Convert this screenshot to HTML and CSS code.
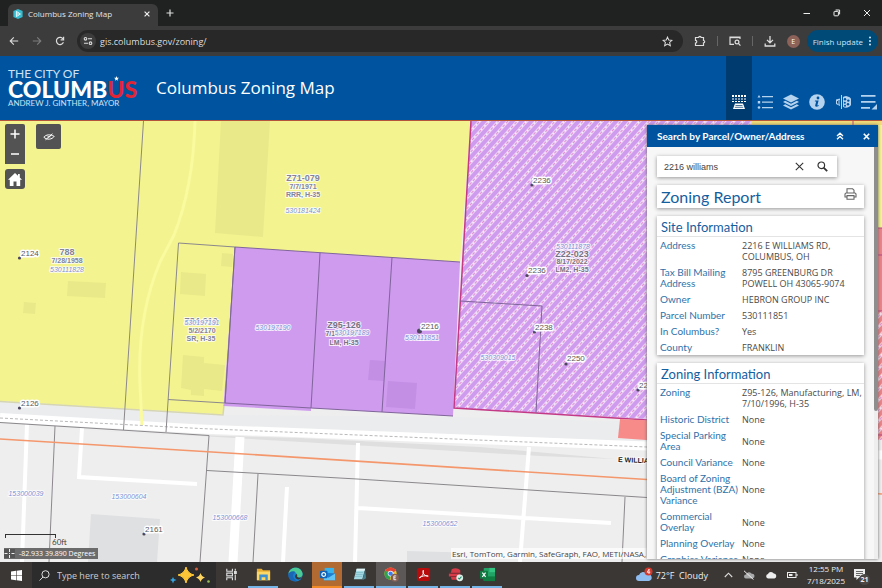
FILE: index.html
```html
<!DOCTYPE html>
<html lang="en">
<head>
<meta charset="utf-8">
<title>Columbus Zoning Map</title>
<link rel="stylesheet" href="styles.css">
</head>
<body>
<header class="tabstrip">
  <div class="tab">
    <svg class="favicon" viewBox="0 0 10 10"><path d="M5 0 9.6 2v6L5 10 .4 8V2z" fill="#35bcd0"/><path d="M3.4 2.4 7.4 5 3.4 7.6z" fill="none" stroke="#e8fbff"/><circle cx="4.9" cy="5" r=".8" fill="#fff"/></svg>
    <span class="tab-title">Columbus Zoning Map</span>
    <button class="plain" aria-label="Close tab"><svg width="6" height="6" viewBox="0 0 6 6"><path d="M.6.6 5.4 5.4M5.4.6.6 5.4" stroke="#eee" stroke-width="1.2"/></svg></button>
  </div>
  <button class="plain newtab" aria-label="New tab"><svg width="8" height="8" viewBox="0 0 8 8"><path d="M4 .5v7M.5 4h7" stroke="#ddd" stroke-width="1.2"/></svg></button>
  <div class="window-buttons">
    <button class="plain" aria-label="Minimize"><svg width="8" height="8" viewBox="0 0 8 8"><path d="M.5 4.5h6.5" stroke="#eee"/></svg></button>
    <button class="plain" aria-label="Restore"><svg width="8" height="8" viewBox="0 0 8 8" fill="none" stroke="#eee"><rect x="1" y="2.4" width="4.4" height="4.4" rx=".6"/><path d="M2.6 1h4v4.4"/></svg></button>
    <button class="plain" aria-label="Close"><svg width="8" height="8" viewBox="0 0 8 8"><path d="M1 1l6 6M7 1 1 7" stroke="#eee"/></svg></button>
  </div>
</header>

<nav class="toolbar">
  <div class="nav-buttons">
    <button class="plain" aria-label="Back"><svg width="10" height="10" viewBox="0 0 10 10" fill="none" stroke="#ddd" stroke-width="1.1"><path d="M9.2 5H1.4M4.8 1.4 1.2 5l3.6 3.6"/></svg></button>
    <button class="plain" aria-label="Forward"><svg width="10" height="10" viewBox="0 0 10 10" fill="none" stroke="#7d7d7d" stroke-width="1.1"><path d="M.8 5h7.8M5.2 1.4 8.8 5 5.2 8.6"/></svg></button>
    <button class="plain" aria-label="Reload"><svg width="10" height="10" viewBox="0 0 10 10" fill="none" stroke="#ddd" stroke-width="1.2"><path d="M8.4 6.2A3.6 3.6 0 1 1 8.2 3.2"/><path d="M8.6.8v3H5.6"/></svg></button>
  </div>
  <div class="omnibox">
    <span class="site-info"><svg width="10" height="10" viewBox="0 0 10 10" fill="none" stroke="#ddd" stroke-width="1.1"><circle cx="2.5" cy="2.8" r="1.3"/><path d="M5 2.8h4M1 7.2h4"/><circle cx="7.5" cy="7.2" r="1.3"/></svg></span>
    <input class="url" aria-label="Address bar" value="gis.columbus.gov/zoning/">
    <button class="plain" aria-label="Bookmark"><svg width="11" height="11" viewBox="0 0 12 12" fill="none" stroke="#ddd" stroke-width="1.1"><path d="M6 1.2l1.4 3.2 3.5.3-2.6 2.3.8 3.5L6 8.7l-3.1 1.8.8-3.5L1.1 4.7l3.5-.3z"/></svg></button>
  </div>
  <div class="extras">
    <button class="plain" aria-label="Extensions"><svg width="12" height="12" viewBox="0 0 12 12" fill="none" stroke="#ddd" stroke-width="1.2"><path d="M1.5 2.5h3.2a1.2 1.2 0 0 1 2.4 0h2.4v3a1.2 1.2 0 0 1 0 2.4v2.6h-8V8a1.3 1.3 0 0 0 0-2.6z"/></svg></button>
    <i class="bar"></i>
    <button class="plain" aria-label="Lens"><svg width="12" height="12" viewBox="0 0 12 12" fill="none" stroke="#ddd" stroke-width="1.2"><path d="M5 9.4H1V2h10v2"/><path d="M1 2.6h10"/><circle cx="8" cy="7" r="1.9"/><path d="M9.4 8.4l2 2.2"/></svg></button>
    <i class="bar"></i>
    <button class="plain" aria-label="Downloads"><svg width="12" height="12" viewBox="0 0 12 12" fill="none" stroke="#ddd" stroke-width="1.3"><path d="M6 1v6.6M3 4.9l3 3 3-3M1.2 8.4v2.6h9.6V8.4"/></svg></button>
    <span class="avatar">E</span>
    <button class="update">Finish update <svg width="4" height="10" viewBox="0 0 4 10" fill="#d5ecfb"><circle cx="2" cy="1.5" r="1"/><circle cx="2" cy="5" r="1"/><circle cx="2" cy="8.5" r="1"/></svg></button>
  </div>
</nav>

<header class="site-header">
  <div class="logo">
    <span class="logo-top">THE CITY OF</span>
    <span class="logo-name">COLUMB<span class="red">US</span><svg class="star" viewBox="0 0 10 10"><path d="M5 0l1.3 3.5L10 3.7 7.1 6 8.1 9.7 5 7.6 1.9 9.7 2.9 6 0 3.7l3.7-.2z" fill="#fff"/></svg></span>
    <span class="logo-mayor">ANDREW J. GINTHER, MAYOR</span>
  </div>
  <h1>Columbus Zoning Map</h1>
  <div class="widgets">
    <button class="widget active" aria-label="Search"><svg viewBox="0 0 16 16" fill="#fff"><path d="M1 1h2v2H1zM4 1h2v2H4zM7 1h2v2H7zM10 1h2v2h-2zM13 1h2v2h-2zM1.500 4h1v2h-1zM4.500 4h1v2h-1zM7.500 4h1v2h-1zM10.500 4h1v2h-1zM13.500 4h1v2h-1zM1 7h2v1H1zM4 7h2v1H4zM7 7h2v1H7zM10 7h2v1h-2zM13 7h2v1h-2z"/><path d="M4 9.500h8l2 5.500H2z"/><path d="M4.500 11.500h7M3.800 13.300h8.400" stroke="#003b70" stroke-width=".7"/></svg></button>
    <button class="widget" aria-label="Legend"><svg viewBox="0 0 16 16"><path d="M2 1l1.500 2.500h-3zM.8 7h2.400v2.400H.8z"/><circle cx="2" cy="13.500" r="1.300"/><path d="M5 2h11v1.300H5zM5 7.500h11v1.300H5zM5 13h11v1.300H5z"/></svg></button>
    <button class="widget" aria-label="Layers"><svg viewBox="0 0 16 16"><path d="M8 .5 16 4.500 8 8.500 0 4.500z"/><path d="M2.200 6.800 0 8l8 4 8-4-2.200-1.200L8 9.700z"/><path d="M2.200 10.300 0 11.500l8 4 8-4-2.200-1.200L8 13.200z"/></svg></button>
    <button class="widget" aria-label="About"><svg viewBox="0 0 16 16"><circle cx="8" cy="8" r="7.800"/><g fill="#00549f"><circle cx="9" cy="4" r="1.400"/><path d="M6 6.500h3.600L8.300 11.500l1.500-.5-.3 1c-1.500 1-3.700 1.200-3.300-.7l1-3.900-1.400.1z"/></g></svg></button>
    <button class="widget" aria-label="Draw"><svg viewBox="0 0 16 16"><path d="M9 2.500A5.800 5.800 0 1 1 8 12.800V3z"/><path d="M1 5.500l4-1v7.500l-4-2zM6 1h1v14H6z"/><path d="M2.500 7v2.500M4 6v4.500" stroke="#00549f"/><g fill="#00549f"><circle cx="10" cy="5.300" r="1.200"/><circle cx="13.300" cy="6.600" r="1.200"/><circle cx="9.800" cy="8.800" r="1"/><circle cx="13" cy="10.200" r="1.200"/><circle cx="10" cy="11.800" r="1"/></g></svg></button>
    <button class="widget" aria-label="More"><svg viewBox="0 0 16 16"><path d="M0 1h14.500v1.800H0zM0 7h14.500v1.800H0zM0 13h9v1.800H0zM16 10v5.500h-5.500z"/></svg></button>
  </div>
</header>

<main class="map">
  <svg class="canvas" viewBox="0 121 882 441" preserveAspectRatio="xMinYMin slice">
    <defs>
      <pattern id="hatch" width="7" height="60" patternUnits="userSpaceOnUse" patternTransform="rotate(42)">
        <path d="M3.500 0v60" stroke="#f8ecfa" stroke-width="2.400"/>
        <path d="M3.500 0v60" stroke="#dc7cc8" stroke-width=".8" stroke-dasharray="3 2"/>
      </pattern>
    </defs>
    <rect y="121" width="882" height="441" fill="#eee"/>
    <path d="M0 401 224 415 454 417 650 422V442L0 416z" fill="#ebecee"/>
    <path d="M0 425 55 428 160 434 300 438 480 447 615 459 540 456 200 436z" fill="#dfdfdf"/>
    <g fill="none" stroke="#fff" stroke-width="4">
      <path d="M27 424 22 562M82 428 79 477 197 484M358 443 355 562M529 447 520 562M358 508 611 523M287 487 283 562"/>
      <path d="M240 437 233 562" stroke-width="9"/>
      <path d="M0 417.500 200 429 647 446 882 455" stroke-width="9"/>
    </g>
    <path d="M0 418 200 428.500 647 447" fill="none" stroke="#b9b9b9" stroke-dasharray="3 2"/>
    <path d="M91 514 160 519 157 562H88zM407 551 480 553V562H407z" fill="#dfe0e2"/>
    <path d="M0 121H471L460 262 235 247 223 414.500 0 401z" fill="#f3f38f"/>
    <path d="M0 401.500 223 415 224 405" fill="none" stroke="#d5d5b4" stroke-width="1.500"/>
    <path d="M221 121H270L263 237 215 233zM68 281 106 283 105 298 67 296zM24 302 36 303 35 314 23 313zM181 272 206 274 205 296 180 294zM222 253 233 254 232 267 221 266zM183 355 204 357V363L225 365 222 391 204 389V396L191 395V390L181 388z" fill="#e9e98a"/>
    <path d="M195 121C194 160 188 200 174 235L160 262C144 300 138 340 140 385L142 425" fill="none" stroke="#fafa9f" stroke-width="3"/>
    <path d="M235 247 460 262 453 416 311 408V411L223.500 406z" fill="#ce9bee"/>
    <path d="M370 360 386 361 384 381 368 380zM388 381 417 383 415 409 386 407z" fill="#c38fe5"/>
    <path d="M471 121H752V425L454 408z" fill="#ce9bee"/>
    <path d="M471 121H752V425L454 408z" fill="url(#hatch)"/>
    <path d="M471 121 454 408 647 420" fill="none" stroke="#c43a86" stroke-width="1.500"/>
    <path d="M620 419 660 421V441L618 438z" fill="#f68b8a"/>
    <path d="M752 121H882V228H752z" fill="#f1dc78"/>
    <path d="M860 125H882V228H860z" fill="#f3f38f"/>
    <path d="M870 228H882V440H870z" fill="#ee8286"/>
    <path d="M870 311H882V440H870z" fill="url(#hatch)"/>
    <path d="M853 121V126M870 228H882M870 255H882M870 311H882M870 435H882" stroke="#b9437e" fill="none"/>
    <g fill="none" stroke="#8b888c">
      <path d="M143.500 121 123.500 430M166 432 178.500 243 235 247 225 403M168 399.500 225 403"/>
      <path d="M0 422.500 209 435.500 200 562M55 426 49 562M207 470.500 357 479 647 497.500M258 474 253 562M625 497 622 562"/>
    </g>
    <g fill="none" stroke="#80659a">
      <path d="M235 247 460 262M320 253 311 408M392 257.500 382 412M225 403 311 408 453 416M460 301 542 306 536 413M235 247 225 403"/>
    </g>
    <path d="M0 439 220 452.500 647 479.500 882 494" fill="none" stroke="#f4976c" stroke-width="1.600"/>
    <g fill="#4e4658">
      <circle cx="19.500" cy="258" r="1.600"/><circle cx="19.500" cy="408" r="1.600"/><circle cx="144" cy="534" r="1.600"/><circle cx="532" cy="185" r="1.600"/><circle cx="527" cy="275.500" r="1.600"/><circle cx="534.500" cy="332" r="1.600"/><circle cx="566" cy="364" r="1.600"/><circle cx="638" cy="390" r="1.600"/><circle cx="419.500" cy="331" r="2.500"/><circle cx="200" cy="332" r="1.600"/>
    </g>
    <g class="halo addr">
      <text x="21" y="256">2124</text><text x="21" y="406">2126</text><text x="145" y="532">2161</text><text x="533" y="183">2236</text><text x="528" y="273">2236</text><text x="535" y="330">2238</text><text x="567" y="361">2250</text><text x="639" y="388">2254</text><text x="421" y="329">2216</text>
    </g>
    <g class="halo case">
      <text class="big" x="67" y="255">788</text><text x="67" y="263">7/28/1958</text>
      <text class="big" x="303" y="181">Z71-079</text><text x="303" y="189">7/7/1971</text><text x="303" y="197">RRR, H-35</text>
      <text class="big" x="201" y="324">Z84-010</text><text x="202" y="333">5/2/2170</text><text x="201" y="341">SR, H-35</text>
      <text class="big grey" x="344" y="328">Z95-126</text><text class="grey" x="341" y="336">7/10/1996</text><text class="grey" x="344" y="345">LM, H-35</text>
      <text class="big grey" x="572" y="257">Z22-023</text><text class="grey" x="572" y="264">8/17/2022</text><text class="grey" x="572" y="272">LM2, H-35</text>
    </g>
    <g class="halo parcel">
      <text x="67" y="272">530111828</text><text x="303" y="213">530181424</text><text x="202" y="325">530197191</text><text x="273" y="330">530197190</text><text x="352" y="335">530197189</text><text x="422" y="340">530111851</text><text x="573" y="249">530111878</text><text x="498" y="360">530309015</text>
      <text x="26" y="496">153000039</text><text x="129" y="499">153000604</text><text x="230" y="520">153000668</text><text x="440" y="526">153000652</text>
    </g>
    <text class="road halo" x="618" y="462" transform="rotate(2 618 462)">E WILLIAMS RD</text>
  </svg>

  <div class="controls">
    <div class="zoom-group">
      <button class="ctl" aria-label="Zoom in"><svg width="10" height="10" viewBox="0 0 10 10"><path d="M5 .5v9M.5 5h9" stroke="#fff" stroke-width="1.500"/></svg></button>
      <button class="ctl" aria-label="Zoom out"><svg width="10" height="10" viewBox="0 0 10 10"><path d="M1 5h8" stroke="#fff" stroke-width="1.500"/></svg></button>
      <button class="ctl home" aria-label="Home"><svg width="14" height="13" viewBox="0 0 14 13" fill="#fff"><path d="M7 0l3 2.800V1h1.800v3.500L14 6.800h-1.800V13H8.500V8.500h-3V13H1.800V6.800H0z"/></svg></button>
    </div>
    <button class="ctl eye" aria-label="Toggle labels"><svg width="12" height="8" viewBox="0 0 12 8" fill="none" stroke="#fff"><path d="M.8 4.200C3 1.500 7 1 11.200 3.400 9 6.600 4 7.200.8 4.200zM2.500 6.800 9.500.8"/><path d="M4.500 3.800h3"/></svg></button>
  </div>
  <div class="scale"><div class="scale-line"></div><span>60ft</span></div>
  <div class="coords"><svg width="11" height="9" viewBox="0 0 11 9"><path d="M5.500 0v3M5.500 6v3M.5 4.500h3M7.500 4.500h3M5 4.500h1" stroke="#eee"/></svg><span>-82.933 39.890 Degrees</span></div>
  <div class="credits">Esri, TomTom, Garmin, SafeGraph, FAO, METI/NASA,</div>

  <section class="panel">
    <header class="panel-head">
      <h2>Search by Parcel/Owner/Address</h2>
      <button class="plain" aria-label="Collapse"><svg width="8" height="8" viewBox="0 0 8 8" fill="none" stroke="#fff" stroke-width="1.300"><path d="M1 4l3-2.800L7 4M1 7.200l3-2.800 3 2.800"/></svg></button>
      <button class="plain" aria-label="Close panel"><svg width="7" height="7" viewBox="0 0 7 7"><path d="M.8.8l5.400 5.400M6.200.8.8 6.200" stroke="#fff" stroke-width="1.600"/></svg></button>
    </header>
    <div class="panel-body">
      <div class="content">
        <form class="search card">
          <input aria-label="Parcel, owner or address" value="2216 williams">
          <button class="plain" type="button" aria-label="Clear"><svg width="9" height="9" viewBox="0 0 9 9"><path d="M.8.8l7.400 7.400M8.200.8.8 8.200" stroke="#333" stroke-width="1.100"/></svg></button>
          <button class="plain" type="button" aria-label="Search"><svg width="11" height="11" viewBox="0 0 11 11" fill="none" stroke="#333"><circle cx="4.300" cy="4.300" r="3.300" stroke-width="1.200"/><path d="M6.800 6.800l3.400 3.400" stroke-width="1.800"/></svg></button>
        </form>
        <div class="card report">
          <h2>Zoning Report</h2>
          <button class="plain" aria-label="Print"><svg width="13" height="12" viewBox="0 0 13 12" fill="none" stroke="#666" stroke-width="1.100"><path d="M3 5V.8h5.600L10 2.200V5M3 9H1V6.200C1 5.500 1.500 5 2.200 5h8.600c.7 0 1.200.5 1.200 1.200V9h-2"/><path d="M3 7.600h7v3.600H3z"/></svg></button>
        </div>
        <section class="card info">
          <h3>Site Information</h3>
          <table>
            <tr><th>Address</th><td>2216 E WILLIAMS RD,<br>COLUMBUS, OH</td></tr>
            <tr><th>Tax Bill Mailing<br>Address</th><td>8795 GREENBURG DR<br>POWELL OH 43065-9074</td></tr>
            <tr><th>Owner</th><td>HEBRON GROUP INC</td></tr>
            <tr><th>Parcel Number</th><td>530111851</td></tr>
            <tr><th>In Columbus?</th><td>Yes</td></tr>
            <tr><th>County</th><td>FRANKLIN</td></tr>
          </table>
        </section>
        <section class="card info">
          <h3>Zoning Information</h3>
          <table>
            <tr><th>Zoning</th><td>Z95-126, Manufacturing, LM,<br>7/10/1996, H-35</td></tr>
            <tr><th>Historic District</th><td>None</td></tr>
            <tr><th>Special Parking<br>Area</th><td>None</td></tr>
            <tr><th>Council Variance</th><td>None</td></tr>
            <tr><th>Board of Zoning<br>Adjustment (BZA)<br>Variance</th><td>None</td></tr>
            <tr><th>Commercial<br>Overlay</th><td>None</td></tr>
            <tr><th>Planning Overlay</th><td>None</td></tr>
            <tr><th>Graphics Variance</th><td>None</td></tr>
          </table>
        </section>
      </div>
      <div class="scrollbar"><div class="thumb"></div></div>
    </div>
  </section>
</main>

<footer class="taskbar">
  <button class="plain start" aria-label="Start"><svg width="11" height="11" viewBox="0 0 11 11" fill="#fff"><path d="M0 1.500 5 .8v4.400H0zM5.600.7 11 0v5.200H5.600zM0 5.800h5v4.400l-5-.7zM5.600 5.800H11V11l-5.400-.7z"/></svg></button>
  <label class="tasksearch">
    <svg width="11" height="11" viewBox="0 0 11 11" fill="none" stroke="#ddd"><circle cx="6.500" cy="4.300" r="3.600"/><path d="M4 7 .6 10.500"/></svg>
    <input placeholder="Type here to search" aria-label="Type here to search">
    <svg class="sparkles" width="42" height="20" viewBox="0 0 42 20"><path d="M16 2Q17.500 8.500 24 10 17.500 11.500 16 18 14.500 11.500 8 10 14.500 8.500 16 2z" fill="#fbc537" stroke="#fbc537" stroke-linejoin="round"/><path d="M30.500 8Q31.500 11.500 35 12.500 31.500 13.500 30.500 17 29.500 13.500 26 12.500 29.500 11.500 30.500 8z" fill="#fcd462"/><path d="M3 12l1 2 2.500 1L4 16l-1 2.500L2 16l-2-1 2-1z" fill="#35a4e0"/><circle cx="26.500" cy="4" r="1.500" fill="#d9603b"/><circle cx="38.500" cy="16.500" r="1.300" fill="#9bc256"/></svg>
  </label>
  <div class="apps">
    <button class="app" aria-label="Task view"><svg viewBox="0 0 18 18" fill="none" stroke="#ddd" stroke-width="1.200"><path d="M4 3v2.500h6V3M4 15v-2.500h6V15M4 7.500h6v3H4zM13 3v2M13 9v6"/><path d="M12.200 6h1.800v2h-1.800z" fill="#ddd"/></svg></button>
    <button class="app open" aria-label="File Explorer"><svg viewBox="0 0 18 18"><path d="M2 3h5l1.500 1.500H16V15H2z" fill="#e9ae31"/><path d="M2 6h14v9H2z" fill="#fbd768"/><path d="M4.500 9h9v6h-2.500v-3H7v3H4.500z" fill="#3d8fd0"/></svg></button>
    <button class="app" aria-label="Edge"><svg viewBox="0 0 18 18"><circle cx="9" cy="9" r="7.500" fill="#1580ce"/><path d="M1.500 8C3 0 15-.5 16.500 8c.3 3-2 4.500-5 4-1.500-.3-1.600-1.200-1-2 .8-3-5-4-9-2z" fill="#4bcb93"/><path d="M1.500 9c1-4 6-4.500 8-2-4 0-4.500 6 1 8.500C5 17.500 1 14 1.500 9z" fill="#1a66b4"/><path d="M11 9.500c-1.200 1.800 1 4 4.500 2.500-1 2-3 2.500-4.500 2-3-1-3-4-1-5.500z" fill="#3a3634"/></svg></button>
    <button class="app alert" aria-label="Outlook"><svg viewBox="0 0 18 18"><path d="M6 2h10v6H6z" fill="#35b4ee"/><path d="M5 7l12 1v7H5z" fill="#1c7fd2"/><path d="M17 8l-7 4.500L5 8v7h12z" fill="#61c4f2"/><rect x="1" y="5" width="8" height="8" rx="1" fill="#0f64ba"/><circle cx="5" cy="9" r="2" fill="none" stroke="#fff" stroke-width="1.200"/></svg></button>
    <button class="app open" aria-label="Notepad"><svg viewBox="0 0 18 18"><path d="M6 3h9l-3 11H3z" fill="#a5d9e4"/><path d="M6 3h9l-.6 2H5.500z" fill="#e4f3f5"/><path d="M15 4l1 9-4 2z" fill="#457e8d"/><path d="M5 7h8M4.500 9h8M4 11h8" stroke="#70adbc" stroke-width=".6"/></svg></button>
    <button class="app open current" aria-label="Chrome"><svg viewBox="0 0 18 18"><circle cx="8" cy="8" r="6.500" fill="#f7c42d"/><path d="M8 8 2.400 4.700A6.500 6.500 0 0 1 13.700 5z" fill="#e54335"/><path d="M8 8 2.400 4.700A6.500 6.500 0 0 0 7.500 14.500z" fill="#2fa352"/><circle cx="8" cy="8" r="3" fill="#fff"/><circle cx="8" cy="8" r="2.300" fill="#3b7ded"/><circle cx="12.500" cy="12.500" r="4.300" fill="#826056"/><path d="M14 10.500h-2.500v4H14M11.500 12.500h2" fill="none" stroke="#fff" stroke-width=".9"/></svg></button>
    <button class="app open" aria-label="Acrobat"><svg viewBox="0 0 18 18"><rect x="2" y="2" width="14" height="14" rx="2.500" fill="#b80c0c"/><path d="M4.500 12.500c3-1 5-5 4.300-8-1.300 2 .7 6.500 5.200 6.200-3-1-7 0-9.500 1.800z" fill="none" stroke="#fff"/></svg></button>
    <button class="app open" aria-label="Database client"><svg viewBox="0 0 18 18"><path d="M5 3.500c3-2 7-1.500 9 1v3H4zM2 8h12v3H2zM4 11.500h10l-2 3H5z" fill="#d53b48"/><path d="M2 7.600h12M3 11.200h11" stroke="#8d2833"/><circle cx="13.500" cy="12.500" r="3.600" fill="#dceee8"/><path d="M11.800 12.500l1.300 1.300 2.200-2.600" fill="none" stroke="#258d6d" stroke-width="1.100"/></svg></button>
    <button class="app open" aria-label="Excel"><svg viewBox="0 0 18 18"><rect x="5" y="2" width="12" height="14" rx="1" fill="#21a366"/><path d="M11 2h6v4.500h-6z" fill="#33c481"/><path d="M5 11h12v5H5z" fill="#107c41"/><rect x="1" y="5" width="8.500" height="8.500" rx="1" fill="#117a43"/><path d="M3.500 7l3.500 4.500M7 7l-3.500 4.500" stroke="#fff" stroke-width="1.200"/></svg></button>
  </div>
  <div class="tray">
    <svg width="18" height="16" viewBox="0 0 18 16"><path d="M3 14a3 3 0 0 1 0-6 4.500 4.500 0 0 1 8-1 3.500 3.500 0 0 1 2 7z" fill="#8fbdf0"/><circle cx="12.500" cy="4.500" r="4" fill="#d3382d"/><path d="M13 2v5M13.200 2.200 11 5.200h3.300" fill="none" stroke="#fff" stroke-width=".8"/></svg>
    <span class="weather">72°F&nbsp; Cloudy</span>
    <svg width="9" height="6" viewBox="0 0 9 6"><path d="M.8 5 4.500 1.200 8.200 5" fill="none" stroke="#ddd" stroke-width="1.100"/></svg>
    <svg width="12" height="10" viewBox="0 0 12 10"><path d="M3 8.500a2 2 0 0 1 0-4 3.200 3.200 0 0 1 5.800-.7 2.300 2.300 0 0 1 .7 4.700z" fill="#aaa"/><path d="M1 .8l9.500 8.800" stroke="#eee"/></svg>
    <svg width="12" height="10" viewBox="0 0 12 10"><path d="M3 8.500a2.300 2.300 0 0 1 0-4.500 3.200 3.200 0 0 1 5.800-.4 2.500 2.500 0 0 1 .7 4.900z" fill="#eee"/></svg>
    <svg width="11" height="8" viewBox="0 0 11 8"><rect x=".5" y="1.500" width="8.500" height="5" fill="none" stroke="#eee"/><path d="M2 3h3.500v2H2zM9.500 3h1v2h-1z" fill="#eee"/></svg>
    <div class="clock"><span>12:55 PM</span><span>7/18/2025</span></div>
    <span class="notify"><svg width="12" height="12" viewBox="0 0 12 12"><path d="M0 0h11v8.500H5L2.500 11V8.500H0z" fill="#eee"/><path d="M2 2.500h7M2 4.500h7M2 6.500h4" stroke="#444" stroke-width=".8"/></svg><b>21</b></span>
  </div>
</footer>
</body>
</html>
```
FILE: styles.css
```css
* { box-sizing: border-box; }
html, body { height: 100%; }
body { margin: 0; display: flex; flex-direction: column; overflow: hidden; font-family: Lato, sans-serif; }
button, input { font: inherit; color: inherit; border: 0; background: none; padding: 0; margin: 0; }
input { min-width: 0; outline: 0; }
svg { display: block; flex: none; }
.plain { display: flex; align-items: center; justify-content: center; }

/* Browser chrome */
.tabstrip { display: flex; flex: none; height: 26px; background: #202222; font-family: "Open Sans", sans-serif; }
.tab { display: flex; align-items: center; gap: 5px; width: 150px; margin: 4px 0 0 8px; padding: 0 8px 3px 5px; border-radius: 6px 6px 0 0; background: #3c3c3c; }
.favicon { width: 10px; height: 10px; }
.tab-title { flex: 1; color: #e4e4e4; font-size: 8px; }
.newtab { width: 24px; }
.window-buttons { display: flex; gap: 22px; margin-left: auto; padding-right: 11px; }
.toolbar { display: flex; flex: none; align-items: center; height: 30px; background: #3c3c3c; padding-right: 4px; font-family: "Open Sans", sans-serif; }
.nav-buttons { display: flex; gap: 13px; padding: 0 12px 0 9px; }
.omnibox { display: flex; flex: 1; align-items: center; height: 22px; padding: 0 10px 0 3px; border-radius: 11px; background: #282828; color: #ddd; font-size: 9px; }
.site-info { display: flex; align-items: center; justify-content: center; width: 16px; height: 16px; border-radius: 8px; background: #3c3c3c; }
.url { flex: 1; margin-left: 4px; }
.extras { display: flex; align-items: center; gap: 11px; padding-left: 11px; }
.bar { width: 1px; height: 10px; background: #666; }
.avatar { width: 13px; height: 13px; border-radius: 7px; background: #8d6259; color: #fff; font-size: 7px; line-height: 13px; text-align: center; }
.update { display: flex; align-items: center; gap: 5px; height: 22px; margin-left: -4px; padding: 0 6px; border-radius: 11px; background: #004a77; color: #cbe6f8; font-size: 8px; white-space: nowrap; }

/* Application header */
.site-header { display: flex; flex: none; align-items: stretch; height: 65px; background: #00549f; border-bottom: 1px solid #b3543c; color: #fff; }
.logo { display: flex; flex-direction: column; width: 148px; padding: 12px 0 0 8px; color: #cfe2f4; }
.logo-top { font-size: 12px; line-height: 11px; }
.logo-name { position: relative; color: #fff; font-size: 23px; font-weight: 900; line-height: 20px; }
.red { color: #e02536; }
.star { position: absolute; left: 106px; top: -3px; width: 5px; height: 5px; }
.logo-mayor { font-size: 8px; line-height: 9px; white-space: nowrap; }
h1 { align-self: center; margin: 0 0 0 8px; font-family: "Open Sans", sans-serif; font-size: 17px; font-weight: 400; line-height: 24px; }
.widgets { display: flex; margin-left: auto; }
.widget { display: flex; align-items: flex-end; justify-content: center; width: 26px; padding-bottom: 10px; }
.widget svg { width: 16px; height: 16px; fill: #b5d2ee; }
.widget.active { background: #003b70; }
.widget.active svg { fill: #fff; }

/* Map */
.map { position: relative; flex: 1; min-height: 0; overflow: hidden; background: #eee; }
.canvas { width: 100%; height: 100%; }
.canvas text { font-family: "Liberation Sans", sans-serif; font-size: 7px; }
.halo { paint-order: stroke; stroke: #fff; stroke-opacity: .8; stroke-width: 2px; stroke-linejoin: round; }
.addr { stroke-opacity: 1; stroke-width: 3px; }
.canvas .addr text { font-size: 8px; fill: #5a5a5a; }
.case text { fill: #83839d; font-weight: 700; text-anchor: middle; }
.canvas .case .big { font-size: 9px; }
.case .grey { fill: #777383; }
.parcel text { fill: #7c93d6; font-style: italic; text-anchor: middle; }
.canvas .road { font-weight: 700; fill: #222; }
.controls { position: absolute; left: 5px; top: 3px; display: flex; align-items: flex-start; gap: 11px; }
.zoom-group { display: flex; flex-direction: column; }
.ctl { display: flex; align-items: center; justify-content: center; width: 20px; height: 20px; background: #535353; }
.ctl:first-child { border-radius: 2px 2px 0 0; }
.ctl.home { margin-top: 5px; border-radius: 3px; }
.ctl.eye { width: 25px; height: 25px; border-radius: 2px; }
.scale { position: absolute; left: 5px; bottom: 16px; font-size: 8px; line-height: 8px; color: #444; }
.scale-line { width: 51px; height: 4px; border: 1px solid #333; border-bottom: 0; }
.scale span { margin-left: 47px; }
.coords { position: absolute; left: 4px; bottom: 3px; display: flex; align-items: center; gap: 4px; height: 11px; padding: 0 3px 0 0; background: #6b6b6b; color: #fff; font-family: "Open Sans", sans-serif; font-size: 7px; line-height: 11px; }
.coords svg { background: #555; }
.credits { position: absolute; right: 235px; bottom: 3px; padding: 0 1px; background: rgba(255, 255, 255, .7); color: #444; font-family: "Open Sans", sans-serif; font-size: 8px; line-height: 11px; white-space: nowrap; }

/* Search panel */
.panel { position: absolute; top: 4px; right: 4px; bottom: 3px; display: flex; flex-direction: column; width: 231px; background: #f7f7f7; box-shadow: 0 0 3px #666; }
.panel-head { display: flex; flex: none; align-items: center; gap: 19px; height: 22px; padding: 0 8px 0 10px; background: #00549f; color: #fff; }
.panel-head h2 { flex: 1; margin: 0; font-size: 10px; font-weight: 700; white-space: nowrap; }
.panel-body { display: flex; flex: 1; min-height: 0; }
.content { display: flex; flex: 1; flex-direction: column; gap: 8px; padding: 9px 10px 0; overflow: hidden; }
.card { flex: none; background: #fff; box-shadow: 0 1px 4px rgba(0, 0, 0, .4); }
.search { display: flex; align-items: center; gap: 13px; width: 180px; height: 21px; padding: 0 9px 0 7px; }
.search input { flex: 1; color: #444; font-family: "Liberation Sans", sans-serif; font-size: 9px; }
.report { display: flex; align-items: flex-start; justify-content: space-between; height: 23px; padding: 3px 7px 0 4px; }
.report h2 { margin: 0; color: #14609f; font-size: 16px; font-weight: 400; line-height: 18px; }
.info { color: #4a4a4a; }
.info h3 { margin: 0; padding: 2px 4px 0; border-bottom: 1px solid #e4e4e4; color: #14609f; font-size: 13px; font-weight: 400; line-height: 18px; }
table { border-collapse: collapse; table-layout: fixed; width: 100%; font-size: 10px; line-height: 11px; }
th, td { padding: 3px 0 2px 2px; font-weight: 400; text-align: left; white-space: nowrap; vertical-align: middle; }
td { font-family: "Open Sans", sans-serif; font-size: 9px; }
th { width: 83px; padding-left: 3px; color: #2f72a9; vertical-align: top; }
.scrollbar { flex: none; width: 4px; background: #eee; }
.thumb { height: 64%; background: #8e8e8e; border-radius: 0 0 2px 2px; }

/* Taskbar */
.taskbar { display: flex; flex: none; align-items: stretch; height: 26px; background: #3b3735; color: #eee; font-family: "Open Sans", sans-serif; }
.start { width: 32px; }
.tasksearch { display: flex; align-items: center; gap: 7px; width: 184px; padding: 0 4px 0 7px; background: #2c2c2c; }
.tasksearch input { flex: 1; font-size: 9px; }
.tasksearch input::placeholder { color: #ccc; opacity: 1; }
.apps { display: flex; gap: 2px; }
.app { display: flex; align-items: center; justify-content: center; width: 30px; border-bottom: 2px solid transparent; }
.app svg { width: 17px; height: 17px; }
.open { border-color: #76b5e8; }
.alert { background: #b06a32; border-color: #f28a28; }
.current { background: #5b5857; }
.tray { display: flex; align-items: center; gap: 10px; margin-left: auto; padding-right: 12px; font-size: 9px; }
.weather { margin: 0 6px 0 -8px; white-space: nowrap; }
.clock { display: flex; flex-direction: column; align-items: center; width: 36px; font-size: 8px; line-height: 12px; white-space: nowrap; }
.notify { position: relative; padding-right: 4px; }
.notify b { position: absolute; right: 0; bottom: -4px; width: 11px; height: 11px; border-radius: 6px; background: #4b4745; font-size: 7px; line-height: 11px; text-align: center; }
```
